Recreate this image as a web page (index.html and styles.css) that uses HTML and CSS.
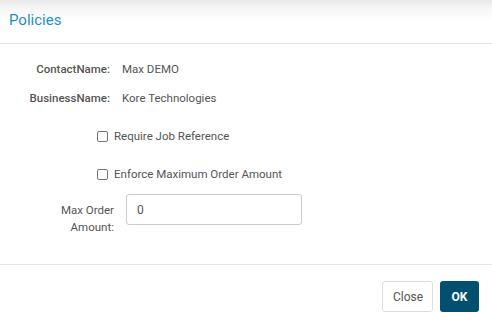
FILE: index.html
```html
<!DOCTYPE html>
<html lang="en">
<head>
    <meta charset="UTF-8">
    <meta name="viewport" content="width=device-width, initial-scale=1.0">
    <title>Policies</title>
    <link rel="stylesheet" href="styles.css">
</head>
<body>

    <div class="modal">
        <div class="modal-header">
            <h4 class="modal-title">Policies</h4>
        </div>

        <div class="modal-body">
            <div class="info-row">
                <span class="info-label">ContactName:</span>
                <span class="info-value">Max DEMO</span>
            </div>
            <div class="info-row">
                <span class="info-label">BusinessName:</span>
                <span class="info-value">Kore Technologies</span>
            </div>

            <label class="check-row">
                <input type="checkbox" class="check">
                <span>Require Job Reference</span>
            </label>
            <label class="check-row">
                <input type="checkbox" class="check">
                <span>Enforce Maximum Order Amount</span>
            </label>

            <div class="field-row">
                <label class="field-label" for="max-order">Max Order Amount:</label>
                <input type="text" id="max-order" class="field-input" value="0">
            </div>
        </div>

        <div class="modal-footer">
            <button class="btn btn-default">Close</button>
            <button class="btn btn-primary">OK</button>
        </div>
    </div>

</body>
</html>
```

FILE: styles.css
```css
body {
    margin: 0;
    font-family: Roboto, "Liberation Sans", Arial, sans-serif;
    font-size: 11.5px;
    color: #555;
    background: #fff;
}

.modal {
    width: 492px;
    height: 329px;
    background: #fff;
}

.modal-header {
    height: 44px;
    box-sizing: border-box;
    padding: 10px 9px 0;
    border-bottom: 1px solid #e5e5e5;
    background: linear-gradient(to bottom, #e9e9e9 0, #f6f6f6 9px, #fff 20px);
}

.modal-title {
    margin: 0;
    font-size: 15px;
    font-weight: 400;
    line-height: 20px;
    color: #1f8fc7;
}

.modal-body {
    height: 220px;
    box-sizing: border-box;
    padding-top: 17px;
}

.info-row {
    display: flex;
    gap: 12px;
    line-height: 16px;
    margin-bottom: 13px;
}

.info-label {
    width: 110px;
    text-align: right;
    font-weight: 500;
    color: #555;
}

.info-value {
    color: #555;
}

.check-row {
    display: flex;
    align-items: center;
    gap: 6px;
    margin-left: 97px;
    line-height: 16px;
    margin-top: 22px;
}

.check-row + .check-row {
    margin-top: 22px;
}

.check {
    appearance: none;
    -webkit-appearance: none;
    width: 11px;
    height: 11px;
    margin: 0;
    border: 1px solid #777;
    border-radius: 2px;
    background: #fff;
}

.field-row {
    display: flex;
    align-items: flex-start;
    gap: 12px;
    margin-top: 12px;
}

.field-label {
    width: 60px;
    margin-left: 54px;
    padding-top: 8px;
    text-align: right;
    line-height: 17px;
}

.field-input {
    width: 176px;
    height: 31px;
    box-sizing: border-box;
    padding: 0 10px;
    border: 1px solid #ccc;
    border-radius: 3px;
    font-family: inherit;
    font-size: 12px;
    color: #555;
}

.modal-footer {
    display: flex;
    justify-content: flex-end;
    gap: 7px;
    padding: 16px 13px 0;
    border-top: 1px solid #e5e5e5;
}

.btn {
    height: 31px;
    padding: 0 10px;
    border-radius: 3px;
    font-family: inherit;
    font-size: 12px;
    cursor: pointer;
}

.btn-default {
    width: 51px;
    background: #fff;
    color: #555;
    border: 1px solid #ddd;
}

.btn-primary {
    width: 39px;
    background: #01506f;
    color: #fff;
    border: none;
    font-weight: 700;
}
```
